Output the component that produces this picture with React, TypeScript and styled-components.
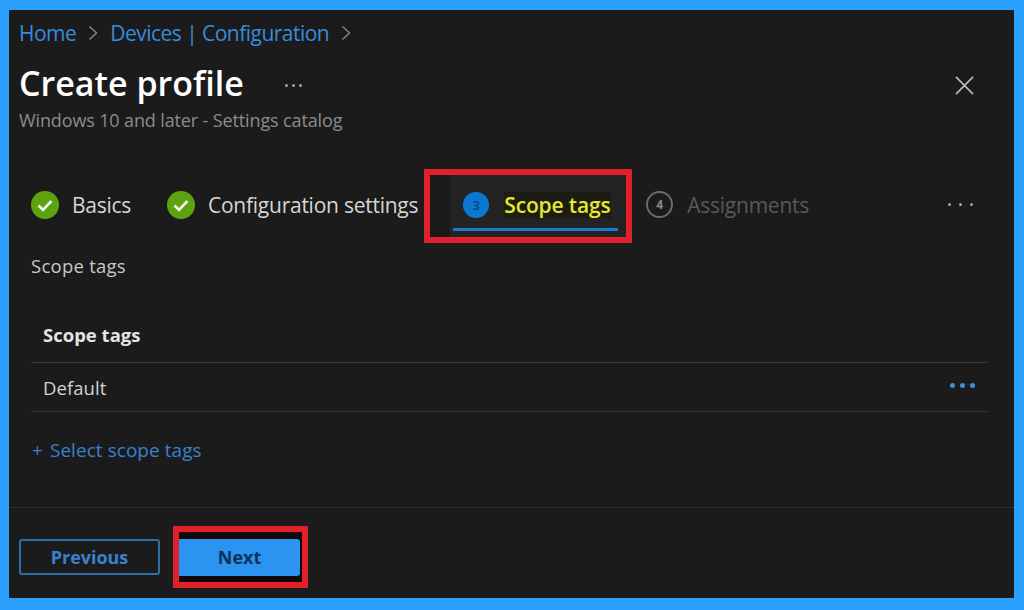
import styled, { createGlobalStyle } from "styled-components";

const GlobalStyle = createGlobalStyle`
  * { box-sizing: border-box; }
  html, body { margin: 0; padding: 0; }
  body {
    background-color: #2ba0ff;
    font-family: "Open Sans", "Noto Sans", "Liberation Sans", sans-serif;
  }
`;

const Page = styled.div`
  width: 1024px;
  height: 610px;
  padding: 10px 10px 12px 9px;
`;

const Panel = styled.div`
  height: 100%;
  background-color: #1b1b1b;
  display: flex;
  flex-direction: column;
`;

const Breadcrumb = styled.nav`
  display: flex;
  align-items: center;
  height: 26px;
  margin: 10px 0 0 10px;
  font-size: 21px;
  letter-spacing: -0.53px;
  color: #3a8ade;
  gap: 10px;
`;

const Chevron = styled.svg`
  width: 10px;
  height: 16px;
  fill: none;
  stroke: #8a8a8a;
  stroke-width: 1.4;
  margin: 0 2px;
`;

const TitleRow = styled.div`
  display: flex;
  align-items: center;
  height: 44px;
  margin: 15px 0 0 10px;
  padding-right: 40px;
`;

const Title = styled.h1`
  margin: 0;
  font-size: 34px;
  font-weight: 600;
  color: #fff;
`;

const TitleMore = styled.div`
  display: flex;
  gap: 4px;
  margin: 4px 0 0 41px;
`;

const Close = styled.svg`
  margin: 4px 0 0 auto;
  width: 19px;
  height: 19px;
  stroke: #b8b8b8;
  stroke-width: 1.8;
  fill: none;
`;

const Subtitle = styled.div`
  height: 24px;
  line-height: 24px;
  margin: 3px 0 0 10px;
  font-size: 18px;
  letter-spacing: -0.13px;
  color: #8c8c8c;
`;

const Tabs = styled.div`
  display: flex;
  align-items: center;
  height: 74px;
  margin-top: 37px;
  padding: 0 41px 0 22px;
`;

const Tab = styled.div<{ $gap: number; $width?: number }>`
  display: flex;
  align-items: center;
  margin-bottom: 3px;
  gap: ${(p) => p.$gap}px;
  ${(p) => (p.$width ? `width: ${p.$width}px;` : "")}
`;

const TabLabel = styled.span<{ $muted?: boolean }>`
  font-size: 21px;
  letter-spacing: -0.25px;
  color: ${(p) => (p.$muted ? "#585858" : "#d6d6d6")};
`;

const CheckIcon = styled.svg`
  width: 28px;
  height: 28px;
  flex: none;
`;

const RedFrame = styled.div`
  border: 6px solid #e0202b;
  display: flex;
  flex-direction: column;
  flex: none;
  width: 208px;
  height: 74px;
  margin: 0 14px 0 6px;
  padding-left: 20px;
  background-color: #1a1a1a;
`;

const ActiveTab = styled.div`
  flex: 1;
  position: relative;
  display: flex;
  align-items: center;
  padding: 0 0 2px 13px;
  gap: 15px;
  background-color: #232323;
`;

const ActiveUnderline = styled.span`
  position: absolute;
  left: 3px;
  right: 8px;
  bottom: 6px;
  height: 3px;
  background-color: #1c7cc9;
`;

const StepCurrent = styled.span`
  width: 26px;
  height: 26px;
  flex: none;
  border-radius: 50%;
  background-color: #0b78d4;
  color: #0c3f78;
  font-size: 13px;
  font-weight: 600;
  display: flex;
  align-items: center;
  justify-content: center;
`;

const ActiveLabel = styled.span`
  font-size: 21px;
  font-weight: 600;
  letter-spacing: -0.15px;
  line-height: 26px;
  color: #e6e82a;
  background-color: #1c1c14;
`;

const StepTodo = styled.span`
  width: 27px;
  height: 27px;
  flex: none;
  border-radius: 50%;
  border: 2px solid #6a6a6a;
  color: #8a8a8a;
  font-size: 12px;
  font-weight: 700;
  display: flex;
  align-items: center;
  justify-content: center;
`;

const TabMore = styled.div`
  margin: 0 0 3px auto;
  display: flex;
  gap: 8px;
`;

const Dot = styled.span<{ $blue?: boolean }>`
  width: ${(p) => (p.$blue ? 5 : 3)}px;
  height: ${(p) => (p.$blue ? 5 : 3)}px;
  border-radius: 50%;
  background-color: ${(p) => (p.$blue ? "#3a8fd6" : "#a5a5a5")};
`;

const Section = styled.section`
  padding: 0 27px 0 22px;
`;

const SectionLabel = styled.div`
  height: 24px;
  line-height: 24px;
  margin-top: 11px;
  font-size: 18.5px;
  letter-spacing: 0.25px;
  color: #c8c8c8;
`;

const TableHead = styled.div`
  display: flex;
  align-items: center;
  height: 53px;
  margin-top: 32px;
  padding: 0 12px 3px;
  border-bottom: 1.5px solid #3a3a3a;
  font-size: 18.5px;
  font-weight: 700;
  color: #e4e4e4;
`;

const TableRow = styled.div`
  display: flex;
  align-items: center;
  justify-content: space-between;
  height: 49px;
  padding: 0 12px;
  border-bottom: 1.5px solid #3a3a3a;
  font-size: 18.5px;
  letter-spacing: 0.05px;
  color: #d4d4d4;
`;

const RowMore = styled.div`
  display: flex;
  gap: 5px;
  transform: translateY(-2px);
`;

const AddLink = styled.a`
  display: flex;
  gap: 7px;
  height: 24px;
  line-height: 24px;
  margin-top: 26px;
  margin-left: 1px;
  font-size: 19px;
  letter-spacing: 0.05px;
  color: #3a80cf;
`;

const Footer = styled.footer`
  margin-top: auto;
  height: 91px;
  border-top: 1.5px solid #2e2e2e;
  display: flex;
  align-items: flex-start;
  padding: 18px 0 0 10px;
`;

const SecondaryButton = styled.button`
  width: 141px;
  height: 36px;
  margin-top: 13px;
  background: transparent;
  border: 2px solid #2f6ea6;
  border-radius: 3px;
  font: 700 18px "Open Sans", sans-serif;
  letter-spacing: -0.05px;
  color: #3a80cf;
`;

const NextFrame = styled.div`
  margin-left: 13px;
  width: 135px;
  height: 62px;
  border: 6px solid #e0202b;
  background-color: #120808;
  display: flex;
  align-items: center;
`;

const PrimaryButton = styled.button`
  width: 121px;
  height: 37px;
  background-color: #2b93f0;
  border: none;
  border-radius: 0 3px 3px 0;
  font: 700 18px "Open Sans", sans-serif;
  color: #10325a;
`;

const Check = () => (
  <CheckIcon viewBox="0 0 28 28">
    <circle cx="14" cy="14" r="14" fill="#5ca30f" />
    <path d="M7.5 14.5l4.5 4.5 8.5-9" fill="none" stroke="#f2f7ea" strokeWidth="2.6" />
  </CheckIcon>
);

const App = () => {
  return (
    <Page>
      <GlobalStyle />
      <Panel>
        <Breadcrumb>
          <span>Home</span>
          <Chevron viewBox="0 0 10 16"><path d="M1.5 1.5L8.5 8l-7 6.5" /></Chevron>
          <span>Devices | Configuration</span>
          <Chevron viewBox="0 0 10 16"><path d="M1.5 1.5L8.5 8l-7 6.5" /></Chevron>
        </Breadcrumb>
        <TitleRow>
          <Title>Create profile</Title>
          <TitleMore>
            <Dot /><Dot /><Dot />
          </TitleMore>
          <Close viewBox="0 0 20 20"><path d="M1 1l18 18M19 1L1 19" /></Close>
        </TitleRow>
        <Subtitle>Windows 10 and later - Settings catalog</Subtitle>
        <Tabs>
          <Tab $gap={13} $width={136}>
            <Check />
            <TabLabel>Basics</TabLabel>
          </Tab>
          <Tab $gap={13}>
            <Check />
            <TabLabel>Configuration settings</TabLabel>
          </Tab>
          <RedFrame>
            <ActiveTab>
              <StepCurrent>3</StepCurrent>
              <ActiveLabel>Scope tags</ActiveLabel>
              <ActiveUnderline />
            </ActiveTab>
          </RedFrame>
          <Tab $gap={14}>
            <StepTodo>4</StepTodo>
            <TabLabel $muted>Assignments</TabLabel>
          </Tab>
          <TabMore>
            <Dot /><Dot /><Dot />
          </TabMore>
        </Tabs>
        <Section>
          <SectionLabel>Scope tags</SectionLabel>
          <TableHead>Scope tags</TableHead>
          <TableRow>
            <span>Default</span>
            <RowMore>
              <Dot $blue /><Dot $blue /><Dot $blue />
            </RowMore>
          </TableRow>
          <AddLink>
            <span>+</span>
            <span>Select scope tags</span>
          </AddLink>
        </Section>
        <Footer>
          <SecondaryButton>Previous</SecondaryButton>
          <NextFrame>
            <PrimaryButton>Next</PrimaryButton>
          </NextFrame>
        </Footer>
      </Panel>
    </Page>
  );
};

export default App;
